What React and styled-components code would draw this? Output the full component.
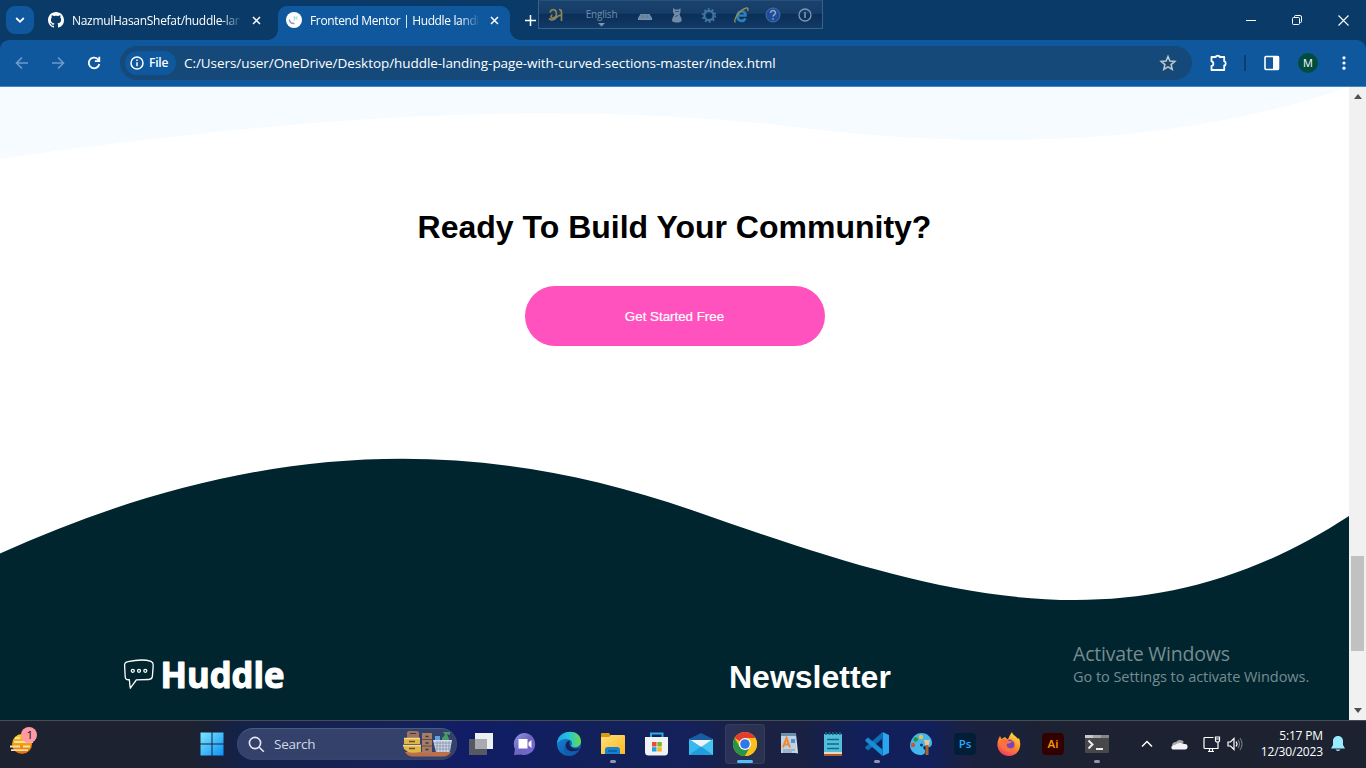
import React from "react";
import styled, { createGlobalStyle } from "styled-components";

const GlobalStyle = createGlobalStyle`
  * { box-sizing: border-box; }
  body { margin: 0; overflow: hidden; background: #fff; }
  svg { display: block; flex: none; overflow: visible; }
`;

const ui = `"Open Sans", "Noto Sans", sans-serif`;
const arial = `"Liberation Sans", Arial, sans-serif`;

const Screen = styled.div`
  width: 1366px;
  height: 768px;
  display: flex;
  flex-direction: column;
  position: relative;
  overflow: hidden;
  font-family: ${ui};
`;

const Label = styled.span`
  font-size: ${(p) => p.$size}px;
  letter-spacing: ${(p) => p.$track || 0}px;
  font-weight: ${(p) => p.$weight || 400};
  color: ${(p) => p.$color || "#fff"};
  line-height: ${(p) => p.$line || 20}px;
  white-space: nowrap;
`;

/* ---------- Browser tab strip ---------- */

const TabStrip = styled.div`
  height: 40px;
  flex: none;
  display: flex;
  background: #0a3a68;
  padding-left: 6px;
`;

const TabSearch = styled.div`
  width: 28px;
  height: 28px;
  margin: 6px 8px 0 0;
  border-radius: 9px;
  background: #0f589d;
  display: flex;
  align-items: center;
  justify-content: center;
`;

const Tab = styled.div`
  width: ${(p) => p.$width}px;
  height: 34px;
  margin-top: 6px;
  padding: 0 8px 6px ${(p) => (p.$active ? 8 : 6)}px;
  display: flex;
  align-items: center;
  gap: 8px;
  position: relative;
  background: ${(p) => (p.$active ? "#0f589d" : "transparent")};
  border-radius: 9px 9px 0 0;
  &::before, &::after {
    content: "";
    display: ${(p) => (p.$active ? "block" : "none")};
    position: absolute;
    bottom: 0;
    width: 10px;
    height: 10px;
  }
  &::before {
    left: -10px;
    background: radial-gradient(circle at 0 0, transparent 9.5px, #0f589d 10px);
  }
  &::after {
    right: -10px;
    background: radial-gradient(circle at 100% 0, transparent 9.5px, #0f589d 10px);
  }
`;

const TabTitle = styled.div`
  width: 168px;
  display: flex;
  padding-top: 1px;
  mask-image: linear-gradient(to right, #000 150px, transparent 170px);
`;

const CloseSlot = styled.div`
  width: 16px;
  display: flex;
  justify-content: center;
`;

const NewTab = styled.div`
  width: 28px;
  height: 28px;
  margin: 6px 0 0 6px;
  display: flex;
  align-items: center;
  justify-content: center;
`;

const WindowButtons = styled.div`
  margin-left: auto;
  display: flex;
  align-items: center;
`;

const WindowButton = styled.div`
  width: 46px;
  display: flex;
  justify-content: center;
`;

/* ---------- Toolbar ---------- */

const ToolbarBack = styled.div`
  height: 47px;
  flex: none;
  background: #0a3a68;
`;

const Toolbar = styled.div`
  height: 47px;
  display: flex;
  align-items: center;
  padding: 0 13px 1px;
  background: #0f589d;
  border-bottom: 1px solid #4485c0;
  border-radius: 9px 9px 0 0;
`;

const NavButtons = styled.div`
  display: flex;
  gap: 18px;
  width: 107px;
`;

const Omnibox = styled.div`
  width: 1072px;
  height: 34px;
  display: flex;
  align-items: center;
  padding: 0 15px 0 5px;
  border-radius: 17px;
  background: #15497a;
`;

const FileChip = styled.div`
  width: 51px;
  height: 24px;
  border-radius: 12px;
  background: #0f589d;
  display: flex;
  align-items: center;
  gap: 5px;
  padding-left: 5px;
  margin-right: 8px;
`;

const StarSlot = styled.div`
  margin-left: auto;
`;

const Actions = styled.div`
  display: flex;
  align-items: center;
  flex: 1;
  padding-left: 17px;
`;

const Divider = styled.div`
  width: 2px;
  height: 16px;
  background: #0a3f74;
  margin: 0 18px 0 16px;
`;

const Avatar = styled.div`
  width: 20px;
  height: 20px;
  border-radius: 50%;
  background: #004d40;
  color: #fff;
  font: 11px/20px ${ui};
  text-align: center;
  margin: 0 24px 0 18px;
`;

/* ---------- Keyboard input bar ---------- */

const InputBar = styled.div`
  position: absolute;
  left: 538px;
  top: 0;
  width: 285px;
  height: 29px;
  border: 1px solid #3b618a;
  border-top-color: #24507c;
  background: linear-gradient(#1b426d 0, #163d68 45%, #0a2f58 50%, #123a66 100%);
  display: flex;
  align-items: center;
  padding-left: 8px;
`;

const Language = styled.div`
  width: 45px;
  margin: 0 12px 0 14px;
  display: flex;
  flex-direction: column;
  align-items: center;
  gap: 3px;
  padding-top: 5px;
`;

const Tools = styled.div`
  display: flex;
  align-items: center;
  gap: 14px;
`;

/* ---------- Page ---------- */

const Viewport = styled.div`
  height: 633px;
  flex: none;
  display: flex;
`;

const Page = styled.main`
  width: 1349px;
  height: 633px;
  overflow: hidden;
  background: #fff;
`;

const CallToAction = styled.section`
  height: 300px;
  padding-top: 49px;
  display: flex;
  flex-direction: column;
  align-items: center;
`;

const Heading = styled.h2`
  margin: 0;
  font: 700 32px/38px ${arial};
  color: ${(p) => p.$color || "#000"};
  white-space: nowrap;
`;

const PinkButton = styled.button`
  width: 300px;
  height: 60px;
  margin-top: 40px;
  border: 0;
  border-radius: 30px;
  background: #ff52bf;
  color: #fff;
  font: 400 13.333px ${arial};
  -webkit-text-stroke: 0.2px #fff;
`;

const Footer = styled.footer`
  height: 130px;
  background: #00252e;
  display: flex;
  padding: 55px 0 0 123px;
`;

const FooterBrand = styled.div`
  width: 606px;
`;

const Scrollbar = styled.div`
  width: 17px;
  background: #f1f1f1;
  display: flex;
  flex-direction: column;
  align-items: center;
  padding: 7px 0 7px;
`;

const Thumb = styled.div`
  width: 13px;
  height: 95px;
  background: #c1c1c1;
  margin: 457px 0 auto;
`;

const Activation = styled.div`
  position: absolute;
  left: 1073px;
  top: 642px;
  display: flex;
  flex-direction: column;
`;

/* ---------- Taskbar ---------- */

const Taskbar = styled.div`
  height: 48px;
  flex: none;
  display: flex;
  border-top: 1px solid #4a4b55;
  background: linear-gradient(
    to right,
    #1c222f 0, #1c222f 190px, #142148 240px, #14225a 400px, #101d66 470px,
    #12215a 600px, #14215a 690px, #1a2142 745px, #1a2142 800px, #11205a 860px,
    #11205c 930px, #1a2142 965px, #1c2232 1050px, #1c222f 1366px
  );
`;

const Widgets = styled.div`
  width: 190px;
  padding: 5px 0 0 9px;
`;

const Cell = styled.div`
  width: 44px;
  height: 46px;
  display: flex;
  align-items: center;
  justify-content: center;
  position: relative;
  &::before {
    content: "";
    display: ${(p) => (p.$focused ? "block" : "none")};
    position: absolute;
    inset: 3px 2px;
    border-radius: 4px;
    background: rgba(255, 255, 255, 0.08);
    border: 1px solid rgba(255, 255, 255, 0.06);
  }
  &::after {
    content: "";
    display: ${(p) => (p.$open || p.$focused ? "block" : "none")};
    position: absolute;
    bottom: 4px;
    width: ${(p) => (p.$focused ? 16 : 6)}px;
    height: 3px;
    border-radius: 2px;
    background: ${(p) => (p.$focused ? "#4cc2ff" : "#9097a8")};
  }
  svg { position: relative; }
`;

const SearchBox = styled.div`
  width: 220px;
  height: 32px;
  margin: 7px 2px 0 3px;
  border: 1px solid #4b5a82;
  border-color: #4b5a82 #3c4b74 #35446d;
  border-radius: 16px;
  background: #33416b;
  display: flex;
  align-items: center;
  padding-left: 10px;
`;

const SearchLabel = styled.div`
  margin-left: 9px;
  display: flex;
`;

const SearchArt = styled.div`
  margin-left: auto;
  padding-right: 3px;
`;

const AppTile = styled.div`
  width: 22px;
  height: 22px;
  border-radius: 4px;
  background: ${(p) => p.$bg};
  color: ${(p) => p.$fg};
  font: 600 11.5px/21px ${ui};
  text-align: center;
`;

const Tray = styled.div`
  margin-left: auto;
  height: 46px;
  display: flex;
  align-items: center;
  padding-right: 21px;
`;

const CloudSlot = styled.div`
  margin: 0 15px 0 18px;
`;

const VolumeSlot = styled.div`
  margin-left: 7px;
`;

const Clock = styled.div`
  width: 66px;
  display: flex;
  flex-direction: column;
  align-items: flex-end;
  margin: 0 8px 0 14px;
`;

const Line = ({ w = 16, h = 16, d, stroke = "#fff", sw = 1.5 }) => (
  <svg width={w} height={h} viewBox={`0 0 ${w} ${h}`} fill="none" stroke={stroke} strokeWidth={sw}>
    <path d={d} />
  </svg>
);

const GithubMark = () => (
  <svg width="16" height="16" viewBox="0 0 16 16" fill="#fff">
    <path d="M8 0C3.58 0 0 3.58 0 8c0 3.54 2.29 6.53 5.47 7.59.4.07.55-.17.55-.38 0-.19-.01-.82-.01-1.49-2.01.37-2.53-.49-2.69-.94-.09-.23-.48-.94-.82-1.13-.28-.15-.68-.52-.01-.53.63-.01 1.08.58 1.23.82.72 1.21 1.87.87 2.33.66.07-.52.28-.87.51-1.07-1.78-.2-3.64-.89-3.64-3.95 0-.87.31-1.59.82-2.15-.08-.2-.36-1.02.08-2.12 0 0 .67-.21 2.2.82.64-.18 1.32-.27 2-.27s1.36.09 2 .27c1.53-1.04 2.2-.82 2.2-.82.44 1.1.16 1.92.08 2.12.51.56.82 1.27.82 2.15 0 3.07-1.87 3.75-3.65 3.95.29.25.54.73.54 1.48 0 1.07-.01 1.93-.01 2.2 0 .21.15.46.55.38A8.01 8.01 0 0 0 16 8c0-4.42-3.58-8-8-8z" />
  </svg>
);

const MentorMark = () => (
  <svg width="16" height="16" viewBox="0 0 16 16" fill="none">
    <circle cx="8" cy="8" r="8" fill="#fff" />
    <path d="M3.200 7.500c.6 2.700 2.500 4.200 5.300 4" stroke="#8d97c4" strokeWidth="1.300" />
    <path d="M8.200 4v5M11.500 4.500l-2 1.500 2 1.500" stroke="#a9dcdc" strokeWidth="1.100" />
  </svg>
);

const TabClose = () => <Line w={9} h={9} d="M1 1l7 7M8 1L1 8" sw={1.5} />;

function InputTools() {
  return (
    <InputBar>
      <svg width="18" height="18" viewBox="0 0 18 18" fill="none" stroke="#8c8658" strokeWidth="1.700">
        <path d="M3.500 6.500C3 3.500 7.500 2.500 9 5.500c1.500 3.500-1 7-3.500 6.500-2-.6-1.500-3 0-3M2 12.500c3 2.500 6 1 8.500-2 1.500-1.500 2.500-1 4-1M12 3.500q2.500 0 2.500 2.500v9" />
      </svg>
      <Language>
        <Label $size={10} $line={12} $track={-0.2} $color="#718dab">English</Label>
        <svg width="7" height="4"><path d="M0 0h7L3.500 3.500z" fill="#7c96b0" /></svg>
      </Language>
      <Tools>
        <svg width="18" height="18" viewBox="0 0 18 18">
          <path d="M4.500 8h9l2.500 4v2H2v-2z" fill="#7790a9" />
          <path d="M4 10h10M3 12h12M7 8v4M11 8v4" stroke="#567291" strokeWidth=".6" />
        </svg>
        <svg width="18" height="18" viewBox="0 0 18 18">
          <path d="M5 2l2 1.500h3.500L12.500 2v4l-1 2.500 2 4c1 3.500-1.500 4-4.700 4s-5.500-.5-4.500-4l2-4L5 6z" fill="#718ba4" />
          <path d="M7 5.500h4M7 10.500l3-1" stroke="#37597c" />
        </svg>
        <svg width="18" height="18" viewBox="0 0 18 18" fill="none">
          <circle cx="9" cy="9.500" r="4.600" stroke="#4275a5" strokeWidth="2.200" />
          <circle cx="9" cy="9.500" r="6.400" stroke="#4275a5" strokeWidth="1.700" strokeDasharray="2 2.021" />
        </svg>
        <svg width="18" height="18" viewBox="0 0 18 18" fill="none">
          <path d="M13.500 12.500c-2.300 3.800-8.200 3-8.200-2.300 0-6.500 8.800-6 8.200-.7H6" stroke="#2e7fb8" strokeWidth="2.600" />
          <path d="M3.500 16.500C.5 15 7 3.500 14.500 2c2-.3 1.700 1.500 1 3" stroke="#99904f" strokeWidth="1.300" />
        </svg>
        <svg width="18" height="18" viewBox="0 0 18 18" fill="none">
          <circle cx="9" cy="9" r="7" fill="#1f4c99" stroke="#476faa" />
          <path d="M6.500 7c0-3.500 5.300-3 5 0-.2 1.500-2.300 1.700-2.400 3.500M9 12.200v1.500" stroke="#8fa7c5" strokeWidth="1.500" />
        </svg>
        <svg width="18" height="18" viewBox="0 0 18 18" fill="none" stroke="#7f98b1">
          <circle cx="9" cy="9" r="6" strokeWidth="1.300" />
          <path d="M9 6v6" strokeWidth="1.600" />
        </svg>
      </Tools>
    </InputBar>
  );
}

function HuddleLogo() {
  return (
    <svg width="164" height="54" viewBox="0 0 164 54">
      <path d="M5 4.500C13 2.700 22 2.200 28 4.200c1.500.8 2.300 2 2.200 4l-.8 11c-.3 2.300-1.500 3-3.500 3.100l-12.600.4C12 25 9.300 28 7.400 31c-.8-2.500-.7-5.500-1-8.500-3 .3-4-.7-4.200-3L1.600 8c-.1-2 .8-3 3.400-3.500z" transform="translate(0 -.8)" fill="none" stroke="#fff" strokeWidth="1.300" strokeLinejoin="round" />
      <g fill="none" stroke="#fff" strokeWidth="1.300">
        <circle cx="9.800" cy="12.800" r="1.500" /><circle cx="16" cy="12.800" r="1.500" /><circle cx="22.300" cy="12.800" r="1.500" />
      </g>
      <text x="37.500" y="30.300" textLength="124" lengthAdjust="spacingAndGlyphs" fill="#fff" stroke="#fff" strokeWidth="1.200" strokeLinejoin="round" fontFamily="Open Sans, sans-serif" fontWeight="700" fontSize="36">Huddle</text>
    </svg>
  );
}

const WeatherIcon = () => (
  <svg width="30" height="30" viewBox="0 0 30 30">
    <defs><linearGradient id="sun" x2="0" y2="1"><stop stopColor="#ffd20a" /><stop offset="1" stopColor="#e8690b" /></linearGradient></defs>
    <circle cx="13" cy="18" r="10" fill="url(#sun)" />
    <path d="M6 12h5M5 16h19M1 20.500h10M14 20.500h7M2 24.200h17" stroke="#f6dfae" strokeWidth="1.800" />
    <circle cx="20" cy="9" r="8" fill="#ff99a4" />
    <text x="20.800" y="13" textAnchor="middle" fontFamily="Open Sans, sans-serif" fontSize="11.500" fill="#111">1</text>
  </svg>
);

const StartIcon = () => (
  <svg width="24" height="24" viewBox="0 0 24 24">
    <defs><linearGradient id="win" gradientUnits="userSpaceOnUse" x1="0" y1="0" x2="24" y2="24"><stop stopColor="#7eeaff" /><stop offset="1" stopColor="#0a8ff5" /></linearGradient></defs>
    <path d="M.5.500h11v11H.5zM12.500.5h11v11h-11zM.5 12.500h11v11H.5zM12.500 12.500h11v11h-11z" fill="url(#win)" />
  </svg>
);

const OrganizerArt = () => (
  <svg width="50" height="28" viewBox="0 0 50 28">
    <path d="M2 22h46c-3 4-5 4.500-9 4.500H11C6 26.500 4 25 2 22z" fill="#bd7048" />
    <path d="M4 2l2-1h8l2 1v6H4z" fill="#9a7362" /><path d="M7 3.500h6" stroke="#4c3732" />
    <path d="M1 8h16v6H1zM0 15h18v7c-5 1-10 1-13 0l-4-3z" fill="#e2b548" />
    <path d="M1 8.500h16M0 15.500h18" stroke="#f6d987" strokeWidth="1.500" />
    <path d="M6 11.500h6M6 18.500h6" stroke="#67502c" strokeWidth="1.500" />
    <path d="M19 3h10v20H19z" fill="#a57d69" /><path d="M19 9.500h10M19 16h10" stroke="#684d42" />
    <path d="M22.500 6.500h3M22.500 13h3M22.500 19.500h3" stroke="#433634" strokeWidth="1.300" />
    <path d="M32 6h5v6h-5z" fill="#5fa2e0" /><path d="M40 2h7v3l-3-1 2 5v4h-7V8l3-3z" fill="#479c65" />
    <path d="M30 10h19l-2 11q-.5 1-1.500 1H33z" fill="#d3dbe8" />
    <path d="M31 13h17M31 16h17M32 19h15M34 11v11M37 11v11M40 11v11M43 11v11M46 11v10" stroke="#8290ac" strokeWidth=".8" />
  </svg>
);

const TaskViewIcon = () => (
  <svg width="24" height="24" viewBox="0 0 24 24">
    <path d="M6 1h18v16H6z" fill="#eeeff3" /><path d="M0 7h18v16H0z" fill="#555961" /><path d="M6 7h12v10H6z" fill="#aaabb1" />
  </svg>
);

const ChatIcon = () => (
  <svg width="24" height="24" viewBox="0 0 24 24">
    <defs><linearGradient id="chat" x2="1" y2="1"><stop stopColor="#8b9bea" /><stop offset=".5" stopColor="#7064bf" /><stop offset="1" stopColor="#7a68d6" /></linearGradient></defs>
    <path d="M12 1a11 11 0 1 1-4 21.500L1 23l1-6A11 11 0 0 1 12 1z" fill="url(#chat)" />
    <path d="M5.500 7h9v9.500h-9zM15.500 10.500l3-2.500v8l-3-2.500z" fill="#fff" />
  </svg>
);

const EdgeIcon = () => (
  <svg width="24" height="24" viewBox="0 0 24 24">
    <defs>
      <linearGradient id="edgeA" x2="1"><stop stopColor="#1aa5e8" /><stop offset=".5" stopColor="#27c5d6" /><stop offset="1" stopColor="#65dc4a" /></linearGradient>
      <linearGradient id="edgeB" x2="1" y2="1"><stop stopColor="#1686d8" /><stop offset="1" stopColor="#0c4fa0" /></linearGradient>
    </defs>
    <circle cx="12" cy="12" r="12" fill="url(#edgeB)" />
    <path d="M0 11.500C1-3.500 24-4 24 9.500c0 5-5.500 7-9.500 5-.8-.7 1-1.400.5-4C13.500 6 5 5 0 11.500z" fill="url(#edgeA)" />
    <path d="M8.500 14c0-4 3-5.500 5-5.500-1.500 1.200-1.500 4 .2 6 3 3 6.500 2.500 8.800 1.500l-1.200 2.200C15 21 9 19 8.500 14z" fill="#14225a" />
    <path d="M8.500 13.500c.5 5.500 6 7.500 12.700 4.800A12 12 0 0 1 12 24c-5-2-5.500-7-3.500-10.500z" fill="#0f5db1" />
  </svg>
);

const FolderIcon = () => (
  <svg width="24" height="24" viewBox="0 0 24 24">
    <defs><linearGradient id="fold" x2="1" y2="1"><stop stopColor="#ffe07a" /><stop offset="1" stopColor="#fdb91f" /></linearGradient></defs>
    <path d="M0 2q0-1 1-1h7l2 3v3H0z" fill="#d79a10" />
    <path d="M0 5h8l2-2h13q1 0 1 1v18H0z" fill="url(#fold)" />
    <path d="M4 22v-4q0-3 3-3h9q3 0 3 3v4z" fill="#1482cf" /><path d="M7 19h9" stroke="#0a5aa0" strokeWidth="1.500" />
  </svg>
);

const StoreIcon = () => (
  <svg width="24" height="24" viewBox="0 0 24 24">
    <path d="M6 7V1.500h11.500V7" fill="none" stroke="#2bacea" strokeWidth="2" />
    <path d="M0 5h23v15q0 3.500-3.500 3.500h-16Q0 23.500 0 20z" fill="#f1f2f5" />
    <path d="M7 10h4.500v4.500H7z" fill="#e94f2d" /><path d="M12.300 10h4.500v4.500h-4.500z" fill="#78b829" />
    <path d="M7 15.200h4.500v4.300H7z" fill="#20a1e8" /><path d="M12.300 15.200h4.500v4.300h-4.500z" fill="#f8b51d" />
  </svg>
);

const MailIcon = () => (
  <svg width="24" height="24" viewBox="0 0 24 24">
    <path d="M0 7l12-6 12 6v7H0z" fill="#165e9f" /><path d="M1 8h22l-10 8z" fill="#eff4f8" />
    <path d="M0 7l12 8v8H0z" fill="#36b9ef" /><path d="M24 7v16H12v-8z" fill="#45c3f2" /><path d="M0 23l12-8.500L24 23z" fill="#219ddd" />
  </svg>
);

const ChromeIcon = () => (
  <svg width="24" height="24" viewBox="0 0 24 24">
    <circle cx="12" cy="12" r="12" fill="#fbc01c" />
    <path d="M12 12L1.600 6A12 12 0 0 1 22.400 6H12z" fill="#e33b2e" />
    <path d="M1.600 6A12 12 0 0 0 12 24l5.200-9L12 12 6.800 15z" fill="#289447" />
    <path d="M12 6h10.400A12 12 0 0 1 12 24l5.200-9z" fill="#fbc01c" />
    <circle cx="12" cy="12" r="6" fill="#fff" /><circle cx="12" cy="12" r="4.800" fill="#2f78e8" />
  </svg>
);

const WordpadIcon = () => (
  <svg width="22" height="24" viewBox="0 0 22 24">
    <path d="M3 2h15l2 19H4z" fill="#d4e2ed" /><path d="M3 1h15v3H3z" fill="#6b8faf" />
    <path d="M3 4v17h15l2 1-2-3V4z" fill="#bed3e3" />
    <path d="M5 15.500L8.500 6l3.500 9.500M6.500 12.500h4.500" fill="none" stroke="#ef8a35" strokeWidth="2.100" />
    <path d="M13 7h4v4h-4z" fill="#568fd1" /><path d="M5 18h12M5 20h9" stroke="#7e95ac" />
  </svg>
);

const NotepadIcon = () => (
  <svg width="20" height="24" viewBox="0 0 20 24">
    <path d="M1 2h18v19H1z" fill="#53bfdb" /><path d="M1 20h18v2H1z" fill="#ead7bd" /><path d="M1 22h18v2H1z" fill="#a9592e" />
    <path d="M3 0v3M6.500 0v3M10 0v3M13.500 0v3M17 0v3" stroke="#16698a" strokeWidth="1.600" />
    <path d="M4 7.500h12M4 12h12M4 16.500h12" stroke="#126986" strokeWidth="1.700" />
  </svg>
);

const CodeIcon = () => (
  <svg width="24" height="24" viewBox="0 0 24 24">
    <path d="M17.500 0L24 3v18l-6.500 3z" fill="#2aa6ef" />
    <path d="M17.500 0v6.500L3 18.500.300 16.200V15z" fill="#0e6eb3" />
    <path d="M17.500 24v-6.500L3 5.500.300 7.800V9z" fill="#168dd4" />
  </svg>
);

const PaintIcon = () => (
  <svg width="24" height="24" viewBox="0 0 24 24">
    <path d="M12 1c7 0 11 5 11 10 0 4-3 5-5 4-4-2-5 1-2 3 1 3-1 5-5 5C3 22-1 16 2 9c2-5 6-8 10-8z" fill="#43b6ec" />
    <circle cx="12" cy="5" r="2.200" fill="#f5c232" /><circle cx="6.700" cy="7.500" r="2.300" fill="#31903f" /><circle cx="4" cy="13" r="2.200" fill="#d65236" /><circle cx="12.500" cy="13" r="1.500" fill="#123770" />
    <path d="M15 8h6l-1.500 6h-3z" fill="#edc39b" /><path d="M16.500 13h3v10h-3z" fill="#a76628" />
  </svg>
);

const FirefoxIcon = () => (
  <svg width="24" height="24" viewBox="0 0 24 24">
    <defs><linearGradient id="fox" x1=".8" y1="0" x2=".3" y2="1"><stop stopColor="#ffe53b" /><stop offset=".5" stopColor="#ff9029" /><stop offset="1" stopColor="#f23765" /></linearGradient></defs>
    <path d="M3 4l1.500 3L8 5c1 1 2 2 3 2.300L13 3l2-3c.5 3 4 4 6 7l1-1c4 10-2 18-10 18C3 24-2 15 1.500 7z" fill="url(#fox)" />
    <circle cx="12.500" cy="12.500" r="5" fill="#7546ba" />
    <path d="M4 8c3-2 6-1 8 1l4 .3c-2 1-3 2.500-6 2.500-1 2.500 1 4.500 4 4.500 3 0 4-2 3.500-4.500C20 16 16 20.500 11 19.500 5 19 2.500 13 4 8z" fill="#ff7040" />
  </svg>
);

const TerminalIcon = () => (
  <svg width="24" height="24" viewBox="0 0 24 24">
    <path d="M0 3h24v17q0 1-1 1H1q-1 0-1-1z" fill="#48484a" /><path d="M0 3h24v3H0z" fill="#85868a" /><path d="M0 3h8v3H0z" fill="#c7c8cb" /><path d="M8 3h8v3H8z" fill="#a5a6aa" />
    <path d="M3.500 8.500l4 4-4 4M11 17h7" fill="none" stroke="#eee" strokeWidth="2" />
  </svg>
);

const apps = [
  { key: "view", icon: <TaskViewIcon /> },
  { key: "chat", icon: <ChatIcon /> },
  { key: "edge", icon: <EdgeIcon /> },
  { key: "files", icon: <FolderIcon />, open: true },
  { key: "store", icon: <StoreIcon /> },
  { key: "mail", icon: <MailIcon /> },
  { key: "chrome", icon: <ChromeIcon />, focused: true },
  { key: "wordpad", icon: <WordpadIcon /> },
  { key: "notepad", icon: <NotepadIcon /> },
  { key: "code", icon: <CodeIcon />, open: true },
  { key: "paint", icon: <PaintIcon /> },
  { key: "ps", icon: <AppTile $bg="#001e36" $fg="#31a8ff">Ps</AppTile> },
  { key: "firefox", icon: <FirefoxIcon /> },
  { key: "ai", icon: <AppTile $bg="#330000" $fg="#ff9a00">Ai</AppTile> },
  { key: "terminal", icon: <TerminalIcon />, open: true },
];

export default function App() {
  return (
    <Screen>
      <GlobalStyle />
      <TabStrip>
        <TabSearch><Line w={10} h={6} d="M1.200 1l3.800 3.800L8.800 1" sw={1.8} /></TabSearch>
        <Tab $width={236}>
          <GithubMark />
          <TabTitle><Label $size={12} $track={-0.3}>NazmulHasanShefat/huddle-lan</Label></TabTitle>
          <CloseSlot><TabClose /></CloseSlot>
        </Tab>
        <Tab $width={232} $active>
          <MentorMark />
          <TabTitle><Label $size={12} $track={-0.36}>Frontend Mentor | Huddle landi</Label></TabTitle>
          <CloseSlot><TabClose /></CloseSlot>
        </Tab>
        <NewTab><Line w={11} h={11} d="M5.500 0v11M0 5.500h11" sw={1.5} /></NewTab>
        <WindowButtons>
          <WindowButton><Line w={10} h={10} d="M0 5.500h10" sw={1} /></WindowButton>
          <WindowButton>
            <svg width="10" height="10" viewBox="0 0 10 10" fill="none" stroke="#fff">
              <rect x=".5" y="2.500" width="7" height="7" rx="1" /><path d="M2.500 2V1.500q0-1 1-1H8Q9.500.5 9.500 2v4.500q0 1-1 1H8" />
            </svg>
          </WindowButton>
          <WindowButton><Line w={11} h={11} d="M.5.500l10 10M10.500.500l-10 10" sw={1.1} /></WindowButton>
        </WindowButtons>
      </TabStrip>

      <ToolbarBack>
        <Toolbar>
          <NavButtons>
            <Line w={18} d="M15 8H3.500M9 2.500L3.500 8 9 13.500" stroke="#6c9bc8" sw={1.6} />
            <Line w={18} d="M3 8h11.500M9 2.500L14.500 8 9 13.500" stroke="#6c9bc8" sw={1.6} />
            <svg width="18" height="16" viewBox="0 0 18 16" fill="none" stroke="#fff" strokeWidth="1.800">
              <path d="M14.300 9A5.300 5.300 0 1 1 12.800 4.200L14 5.500" /><path d="M14.300 1.800v4.400H9.900" />
            </svg>
          </NavButtons>
          <Omnibox>
            <FileChip>
              <svg width="14" height="14" viewBox="0 0 14 14" fill="none" stroke="#fff">
                <circle cx="7" cy="7" r="6" strokeWidth="1.500" /><path d="M7 6.200V10.300M7 3.600v1.500" strokeWidth="1.500" />
              </svg>
              <Label $size={12} $weight={600} $track={-0.2}>File</Label>
            </FileChip>
            <Label $size={13.5} $track={-0.06}>C:/Users/user/OneDrive/Desktop/huddle-landing-page-with-curved-sections-master/index.html</Label>
            <StarSlot>
              <svg width="18" height="18" viewBox="0 0 18 18" fill="none" stroke="#c3c6c9" strokeWidth="1.600">
                <path d="M9 2.500l1.900 4.500 4.900.4-3.700 3.200 1.100 4.800L9 12.900l-4.200 2.500 1.100-4.800-3.700-3.200 4.900-.4z" />
              </svg>
            </StarSlot>
          </Omnibox>
          <Actions>
            <svg width="19" height="20" viewBox="0 0 19 20" fill="none" stroke="#fff" strokeWidth="1.800" strokeLinejoin="round">
              <path d="M2.500 4h4.300c0-1.800 3.800-1.800 3.800 0h4.600v4.300c2 .2 2 4 0 4.200V17H2.500v-4c2.500-.3 2.500-4.300 0-4.600z" />
            </svg>
            <Divider />
            <svg width="16" height="16" viewBox="0 0 16 16">
              <rect x="1" y="1.500" width="13.500" height="13" rx="1" fill="none" stroke="#fff" strokeWidth="1.600" /><path d="M9 1h6v14H9z" fill="#fff" />
            </svg>
            <Avatar>M</Avatar>
            <svg width="4" height="16" viewBox="0 0 4 16" fill="#fff"><circle cx="2" cy="2.800" r="1.600" /><circle cx="2" cy="8" r="1.600" /><circle cx="2" cy="13.200" r="1.600" /></svg>
          </Actions>
        </Toolbar>
      </ToolbarBack>

      <Viewport>
        <Page>
          <svg width="1349" height="72" viewBox="0 0 1349 72">
            <path d="M0 0H1349C1190 55 1000 65 800 40.500C545 10 280 32 0 71.700z" fill="#f6fbff" />
          </svg>
          <CallToAction>
            <Heading>Ready To Build Your Community?</Heading>
            <PinkButton>Get Started Free</PinkButton>
          </CallToAction>
          <svg width="1349" height="144" viewBox="0 0 1349 144">
            <path d="M0 94.500C243-15 460-30 693 51.500C930 134.500 1130 200 1349 57V144H0z" fill="#00252e" />
          </svg>
          <Footer>
            <FooterBrand><HuddleLogo /></FooterBrand>
            <Heading $color="#fff">Newsletter</Heading>
          </Footer>
        </Page>
        <Scrollbar>
          <svg width="8" height="5"><path d="M0 5h8L4 0z" fill="#505050" /></svg>
          <Thumb />
          <svg width="8" height="5"><path d="M0 0h8L4 5z" fill="#505050" /></svg>
        </Scrollbar>
      </Viewport>

      <Taskbar>
        <Widgets><WeatherIcon /></Widgets>
        <Cell><StartIcon /></Cell>
        <SearchBox>
          <svg width="17" height="17" viewBox="0 0 17 17" fill="none" stroke="#e5e9f2" strokeWidth="1.600"><circle cx="7" cy="7" r="5.600" /><path d="M11.200 11.200l4.600 4.600" /></svg>
          <SearchLabel><Label $size={13.5} $color="#d3d9e7" $track={-0.25}>Search</Label></SearchLabel>
          <SearchArt><OrganizerArt /></SearchArt>
        </SearchBox>
        {apps.map((a) => <Cell key={a.key} $open={a.open} $focused={a.focused}>{a.icon}</Cell>)}
        <Tray>
          <Line w={12} h={8} d="M1 6.500l5-5 5 5" sw={1.5} />
          <CloudSlot>
            <svg width="17" height="12" viewBox="0 0 17 12"><path d="M1 7a4 4 0 0 1 4-3 5 5 0 0 1 8 0l-8 5z" fill="#a9a9ad" /><path d="M2 11.500C-.5 11 0 7 3 7c2 0 3-2 6-2s3 1 5 1c3.500 0 3.500 5.500 0 5.500z" fill="#f3f3f5" /></svg>
          </CloudSlot>
          <svg width="17" height="18" viewBox="0 0 17 18" fill="none" stroke="#fff" strokeWidth="1.200">
            <path d="M10.500 2.500H2Q1 2.500 1 3.500v9q0 1 1 1h13V7M5 16.500h6M6.500 13.500v3M9.500 13.500v3M12.500 2h4v4l-1 1h-2l-1-1zM12.500 4h4" />
          </svg>
          <VolumeSlot>
            <svg width="16" height="14" viewBox="0 0 16 14" fill="none" stroke="#fff" strokeWidth="1.200">
              <path d="M1 5h2.500L7 1.500v11L3.500 9H1zM9 4.500q2 2.500 0 5" /><path d="M11 2.800q3 4.200 0 8.400M13 1q4 6 0 12" stroke="#70747f" />
            </svg>
          </VolumeSlot>
          <Clock>
            <Label $size={12} $line={16} $track={-0.15}>5:17 PM</Label>
            <Label $size={12} $line={16} $track={-0.15}>12/30/2023</Label>
          </Clock>
          <svg width="14" height="16" viewBox="0 0 14 16" fill="#99ebff"><path d="M7 0c3 0 5 2.300 5 5v4l2 3.500H0L2 9V5c0-2.700 2-5 5-5zM4.500 13.500h5q-2.500 3-5 0z" /></svg>
        </Tray>
      </Taskbar>

      <Activation>
        <Label $size={19.5} $line={24} $color="#768c92" $track={-0.2}>Activate Windows</Label>
        <Label $size={14.5} $line={21} $color="#768c92" $track={-0.04}>Go to Settings to activate Windows.</Label>
      </Activation>
      <InputTools />
    </Screen>
  );
}
